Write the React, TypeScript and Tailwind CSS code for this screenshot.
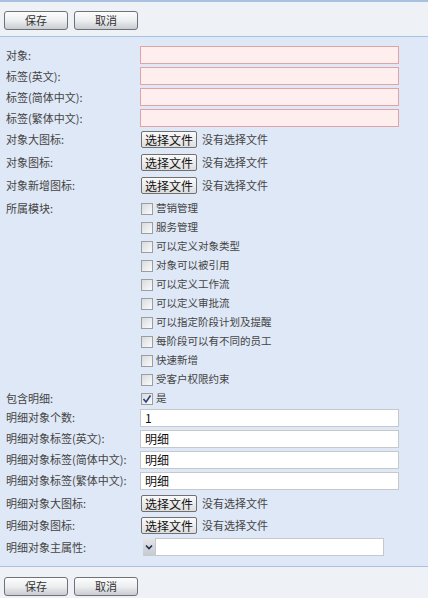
import React from "react";

const font = { fontFamily: '"Noto Sans CJK SC", "Noto Sans", sans-serif' };

function TbButton({ children }: { children: React.ReactNode }) {
  return (
    <div className="w-[64px] h-[19px] rounded-[3px] border border-[#6f7378] bg-gradient-to-b from-[#fdfdfd] via-[#eceef0] to-[#c9ccd1] flex items-center justify-center text-[11px] text-[#333] leading-none">
      {children}
    </div>
  );
}

function Toolbar({ top }: { top: boolean }) {
  return (
    <div
      className={
        top
          ? "h-[37px] shrink-0 border-t-2 border-b border-[#a9c1e0] bg-[#eef1f5] flex items-start pt-[9px] pl-[4px] gap-[6px]"
          : "flex-1 border-t border-[#a9c1e0] bg-[#eef1f5] flex items-start pt-[10px] pl-[4px] gap-[6px]"
      }
    >
      <TbButton>保存</TbButton>
      <TbButton>取消</TbButton>
    </div>
  );
}

function Label({ children }: { children: React.ReactNode }) {
  return (
    <div className="w-[140px] shrink-0 pl-[6px] text-[11px] text-[#444] leading-none">{children}</div>
  );
}

function PinkRow({ label }: { label: string }) {
  return (
    <div className="h-[21px] flex items-start">
      <div className="h-[18px] flex items-center">
        <Label>{label}</Label>
      </div>
      <div className="w-[259px] h-[18px] border border-[#e3a2a6] bg-[#ffeeee]" />
    </div>
  );
}

function TextRow({ label, value }: { label: string; value: string }) {
  return (
    <div className="h-[21px] flex items-start">
      <div className="h-[19px] flex items-center">
        <Label>{label}</Label>
      </div>
      <div className="mt-[1px] w-[259px] h-[18px] border border-[#c6c9cc] bg-white flex items-center pl-[4px] text-[12px] text-[#111] leading-none">
        {value}
      </div>
    </div>
  );
}

function FileRow({ label, h, mt }: { label: string; h: string; mt: string }) {
  return (
    <div className={`${h} flex items-start`}>
      <div className={`${mt} flex items-center h-[17px]`}>
        <Label>{label}</Label>
        <div className="ml-[1px] h-[17px] px-[3px] rounded-[2px] border border-[#707070] bg-gradient-to-b from-[#fafafa] to-[#dedede] flex items-center text-[12px] text-[#111] leading-none">
          选择文件
        </div>
        <span className="ml-[5px] text-[11px] text-[#444] leading-none">没有选择文件</span>
      </div>
    </div>
  );
}

function CheckBox({ checked }: { checked?: boolean }) {
  return (
    <div className="w-[12px] h-[12px] border border-[#9a9ea3] bg-gradient-to-br from-[#d8dadd] to-[#fbfbfb] flex items-center justify-center">
      {checked && (
        <svg width="10" height="10" viewBox="0 0 10 10">
          <path d="M1.5 5 L4 8 L8.5 1.5" fill="none" stroke="#2b3f7a" strokeWidth="1.6" />
        </svg>
      )}
    </div>
  );
}

function CheckRow({ label, text, checked }: { label?: string; text: string; checked?: boolean }) {
  return (
    <div className="h-[19px] flex items-center">
      <Label>{label ?? ""}</Label>
      <div className="ml-[1px] flex items-center gap-[3px]">
        <CheckBox checked={checked} />
        <span className="text-[10.5px] text-[#444] leading-none">{text}</span>
      </div>
    </div>
  );
}

export default function App() {
  const modules = [
    "营销管理",
    "服务管理",
    "可以定义对象类型",
    "对象可以被引用",
    "可以定义工作流",
    "可以定义审批流",
    "可以指定阶段计划及提醒",
    "每阶段可以有不同的员工",
    "快速新增",
    "受客户权限约束",
  ];
  return (
    <div className="w-[428px] h-[598px] flex flex-col bg-[#dfe8f6] overflow-hidden" style={font}>
      <Toolbar top />
      <div className="h-[529px] shrink-0 pt-[9px] flex flex-col">
        <PinkRow label="对象:" />
        <PinkRow label="标签(英文):" />
        <PinkRow label="标签(简体中文):" />
        <PinkRow label="标签(繁体中文):" />
        <FileRow label="对象大图标:" h="h-[23px]" mt="mt-[1px]" />
        <FileRow label="对象图标:" h="h-[23px]" mt="mt-[1px]" />
        <FileRow label="对象新增图标:" h="h-[23px]" mt="mt-[1px]" />
        {modules.map((m, i) => (
          <CheckRow key={m} label={i === 0 ? "所属模块:" : undefined} text={m} />
        ))}
        <CheckRow label="包含明细:" text="是" checked />
        <TextRow label="明细对象个数:" value="1" />
        <TextRow label="明细对象标签(英文):" value="明细" />
        <TextRow label="明细对象标签(简体中文):" value="明细" />
        <TextRow label="明细对象标签(繁体中文):" value="明细" />
        <FileRow label="明细对象大图标:" h="h-[22px]" mt="mt-[3px]" />
        <FileRow label="明细对象图标:" h="h-[22px]" mt="mt-[3px]" />
        <div className="h-[22px] flex items-start">
          <div className="mt-[2px] h-[18px] flex items-center">
            <Label>明细对象主属性:</Label>
            <div className="ml-[3px] flex h-[18px] w-[241px]">
              <div className="w-[12px] h-[18px] bg-gradient-to-b from-[#e4e6e8] to-[#c6c9cd] flex items-center justify-center">
                <svg width="8" height="6" viewBox="0 0 8 6">
                  <path d="M1 1.5 L4 4.5 L7 1.5" fill="none" stroke="#1e2a55" strokeWidth="1.6" />
                </svg>
              </div>
              <div className="flex-1 border border-[#c6c9cc] bg-white" />
            </div>
          </div>
        </div>
      </div>
      <Toolbar top={false} />
    </div>
  );
}
